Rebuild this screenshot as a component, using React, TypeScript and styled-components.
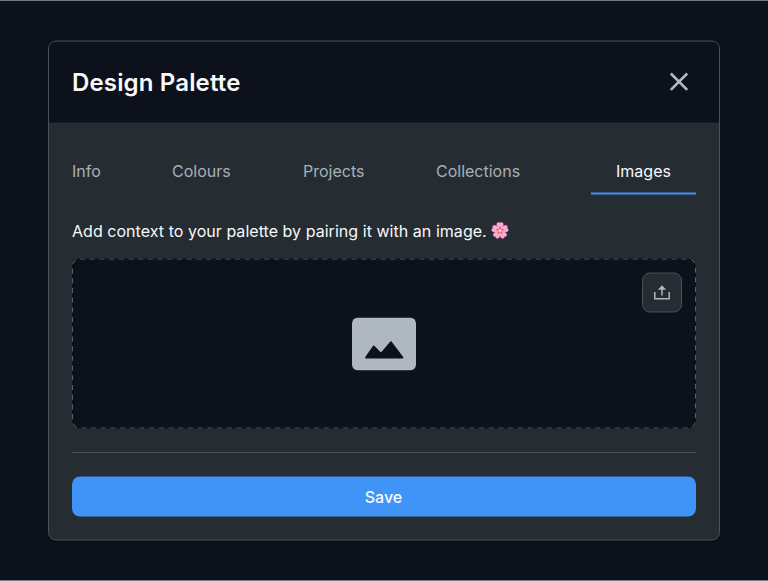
import React from "react";
import styled, { createGlobalStyle } from "styled-components";

const c = {
  bg: "#0c111b",
  panel: "#252c32",
  border: "#48505a",
  muted: "#a9b0b8",
  icon: "#b0b7be",
  text: "#f8f9fa",
  blue: "#4094f7",
};

const GlobalStyle = createGlobalStyle`
  *, *::before, *::after { box-sizing: border-box; }
  body { margin: 0; background: ${c.bg}; font-family: Inter, "Liberation Sans", sans-serif; font-variant-ligatures: none; }
  button { font: inherit; border: 0; padding: 0; background: none; cursor: pointer; }
`;

const Page = styled.main`
  height: 581px;
  padding: 40px 48px 0;
  border-top: 1px solid #737a84;
  border-bottom: 1px solid #737a84;
  background: ${c.bg};
`;

const Modal = styled.section`
  width: 672px;
  height: 500px;
  border: 1px solid ${c.border};
  border-radius: 8px;
  background: ${c.panel};
  overflow: hidden;
  transform: translateY(-0.5px);
`;

const Header = styled.header`
  display: flex;
  align-items: center;
  justify-content: space-between;
  height: 81px;
  padding: 0 28px 0 23px;
  background: ${c.bg};
`;

const Title = styled.h1`
  margin: 0;
  color: ${c.text};
  font-size: 24px;
  font-weight: 600;
  line-height: 32px;
  letter-spacing: 0.15px;
`;

const CloseButton = styled.button`
  display: flex;
  width: 24px;
  height: 24px;
  color: ${c.icon};
`;

const Body = styled.div`
  display: flex;
  flex-direction: column;
  padding: 24px 23px 0;
`;

const Tabs = styled.nav`
  display: grid;
  grid-template-columns: 100px 131px 133px 155px 105px;
  height: 48px;
`;

const Tab = styled.button<{ $active?: boolean }>`
  display: flex;
  align-items: center;
  justify-content: ${(p) => (p.$active ? "center" : "flex-start")};
  height: 48px;
  padding-top: 2px;
  border-bottom: 2px solid ${(p) => (p.$active ? c.blue : "transparent")};
  color: ${(p) => (p.$active ? c.text : c.muted)};
  font-size: 16px;
  line-height: 24px;
`;

const Hint = styled.p`
  display: flex;
  align-items: center;
  gap: 4px;
  margin: 24px 0 0;
  color: ${c.text};
  font-size: 16px;
  line-height: 24px;
  letter-spacing: 0.04px;
  white-space: nowrap;
`;

const DropZone = styled.div`
  position: relative;
  display: flex;
  align-items: center;
  justify-content: center;
  height: 170px;
  margin-top: 16px;
  border-radius: 8px;
  background: ${c.bg};
`;

const DashedOutline = styled.svg`
  position: absolute;
  inset: 0;
  pointer-events: none;
`;

const UploadButton = styled.button`
  position: absolute;
  top: 14px;
  right: 14px;
  display: flex;
  align-items: center;
  justify-content: center;
  width: 40px;
  height: 40px;
  && { border: 1px solid ${c.border}; }
  border-radius: 8px;
  background: ${c.panel};
  color: ${c.icon};
`;

const Divider = styled.hr`
  width: 100%;
  height: 1px;
  margin: 23px 0 24px;
  border: 0;
  background: ${c.border};
  transform: translateY(0.5px);
`;

const SaveButton = styled.button`
  height: 40px;
  padding-right: 1px;
  border-radius: 8px;
  background: ${c.blue};
  color: ${c.text};
  font-size: 16px;
  font-weight: 500;
  line-height: 24px;
`;

const Blossom = () => (
  <svg width="18" height="18" viewBox="-8.5 -8.5 17 17" role="img" aria-label="Cherry blossom">
    {[0, 72, 144, 216, 288].map((a) => (
      <g key={a} transform={`rotate(${a})`}>
        <path d="M0 0C-1.8-2-3.4-3.8-3.2-6-2.9-7.7-1.5-8.5 0-7.2 1.5-8.5 2.9-7.7 3.2-6 3.4-3.8 1.8-2 0 0Z" fill="#fba9cf" stroke="#ec82b2" strokeWidth=".3" />
        <path d="M0-4.4L1-1.5H-1Z" fill="#df5189" />
      </g>
    ))}
    <circle r="1.5" fill="#f7d36c" />
  </svg>
);

const tabs = ["Info", "Colours", "Projects", "Collections", "Images"];

export default function App() {
  return (
    <>
      <GlobalStyle />
      <Page>
        <Modal>
          <Header>
            <Title>Design Palette</Title>
            <CloseButton aria-label="Close">
              <svg width="24" height="24" viewBox="0 0 24 24" fill="none" stroke="currentColor" strokeWidth="2.7">
                <path d="M3.8 3L20.2 19.4M20.2 3L3.8 19.4" />
              </svg>
            </CloseButton>
          </Header>
          <Body>
            <Tabs>
              {tabs.map((t) => (
                <Tab key={t} $active={t === "Images"}>{t}</Tab>
              ))}
            </Tabs>
            <Hint>
              Add context to your palette by pairing it with an image.
              <Blossom />
            </Hint>
            <DropZone>
              <DashedOutline width="624" height="170" fill="none" aria-hidden>
                <rect x=".5" y=".5" width="623" height="169" rx="7.5" stroke="#59616a" strokeDasharray="5 4.7" />
              </DashedOutline>
              <svg width="64" height="53" viewBox="0 0 64 53" aria-hidden>
                <rect width="64" height="53" rx="6" fill="#b0b8bf" />
                <path d="M14 40L21.7 29L29 36.3L39 24.7L50.5 40Z" fill={c.bg} stroke={c.bg} strokeWidth="1.8" strokeLinejoin="round" />
              </svg>
              <UploadButton aria-label="Upload image">
                <svg width="16" height="16" viewBox="0 0 16 16" fill="none" aria-hidden>
                  <path d="M.8 7.5V14.2H15.2V7.5M8 11V4" stroke="currentColor" strokeWidth="1.5" />
                  <path d="M8 .8L12.2 5.3H3.8Z" fill="currentColor" />
                </svg>
              </UploadButton>
            </DropZone>
            <Divider />
            <SaveButton>Save</SaveButton>
          </Body>
        </Modal>
      </Page>
    </>
  );
}
